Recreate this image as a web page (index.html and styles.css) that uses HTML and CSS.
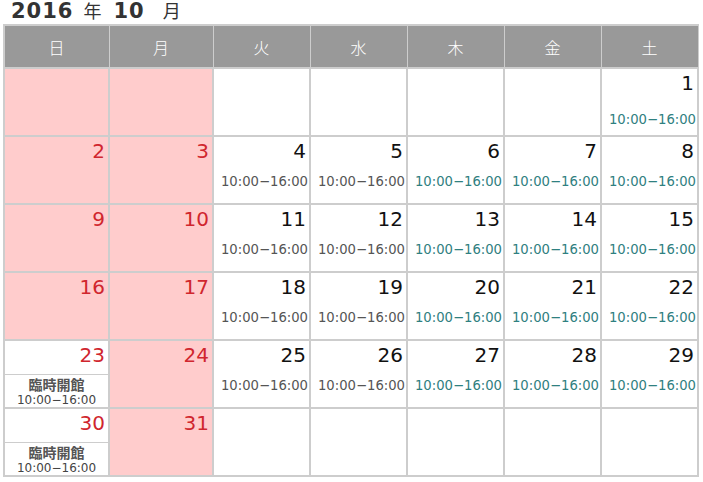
FILE: index.html
```html
<!DOCTYPE html>
<html lang="ja">
<head>
<meta charset="utf-8">
<link rel="stylesheet" href="styles.css">
</head>
<body>
<div class="title"><b class="num-b">2016</b><span class="jp y">年</span><b class="num-b n10">10</b><span class="jp m">月</span></div>
<div class="cal">
  <div class="hd">日</div><div class="hd">月</div><div class="hd">火</div><div class="hd">水</div><div class="hd">木</div><div class="hd">金</div><div class="hd">土</div>

  <div class="c closed"></div><div class="c closed"></div><div class="c"></div><div class="c"></div><div class="c"></div><div class="c"></div>
  <div class="c first"><div class="d">1</div><div class="t teal">10:00−16:00</div></div>

  <div class="c closed"><div class="d red">2</div></div>
  <div class="c closed"><div class="d red">3</div></div>
  <div class="c"><div class="d">4</div><div class="t">10:00−16:00</div></div>
  <div class="c"><div class="d">5</div><div class="t">10:00−16:00</div></div>
  <div class="c"><div class="d">6</div><div class="t teal">10:00−16:00</div></div>
  <div class="c"><div class="d">7</div><div class="t teal">10:00−16:00</div></div>
  <div class="c"><div class="d">8</div><div class="t teal">10:00−16:00</div></div>

  <div class="c closed"><div class="d red">9</div></div>
  <div class="c closed"><div class="d red">10</div></div>
  <div class="c"><div class="d">11</div><div class="t">10:00−16:00</div></div>
  <div class="c"><div class="d">12</div><div class="t">10:00−16:00</div></div>
  <div class="c"><div class="d">13</div><div class="t teal">10:00−16:00</div></div>
  <div class="c"><div class="d">14</div><div class="t teal">10:00−16:00</div></div>
  <div class="c"><div class="d">15</div><div class="t teal">10:00−16:00</div></div>

  <div class="c closed"><div class="d red">16</div></div>
  <div class="c closed"><div class="d red">17</div></div>
  <div class="c"><div class="d">18</div><div class="t">10:00−16:00</div></div>
  <div class="c"><div class="d">19</div><div class="t">10:00−16:00</div></div>
  <div class="c"><div class="d">20</div><div class="t teal">10:00−16:00</div></div>
  <div class="c"><div class="d">21</div><div class="t teal">10:00−16:00</div></div>
  <div class="c"><div class="d">22</div><div class="t teal">10:00−16:00</div></div>

  <div class="c special"><div class="d red sp">23</div><div class="note">臨時開館</div><div class="st">10:00−16:00</div></div>
  <div class="c closed"><div class="d red">24</div></div>
  <div class="c"><div class="d">25</div><div class="t">10:00−16:00</div></div>
  <div class="c"><div class="d">26</div><div class="t">10:00−16:00</div></div>
  <div class="c"><div class="d">27</div><div class="t teal">10:00−16:00</div></div>
  <div class="c"><div class="d">28</div><div class="t teal">10:00−16:00</div></div>
  <div class="c"><div class="d">29</div><div class="t teal">10:00−16:00</div></div>

  <div class="c special"><div class="d red sp">30</div><div class="note">臨時開館</div><div class="st">10:00−16:00</div></div>
  <div class="c closed"><div class="d red">31</div></div>
  <div class="c"></div><div class="c"></div><div class="c"></div><div class="c"></div><div class="c"></div>
</div>
</body>
</html>
```

FILE: styles.css
```css
html, body {
  margin: 0;
  padding: 0;
  background: #fff;
}
body {
  font-family: "DejaVu Sans", "Noto Sans CJK JP", sans-serif;
  color: #000;
}
.title {
  height: 24px;
  box-sizing: border-box;
  padding-left: 11px;
  display: flex;
  align-items: baseline;
  line-height: 22px;
  color: #333;
}
.num-b {
  font-family: "DejaVu Sans", sans-serif;
  font-weight: bold;
  font-size: 21px;
  letter-spacing: 1px;
}
.jp {
  font-family: "Noto Sans CJK JP", sans-serif;
  font-size: 18px;
  line-height: 18px;
  font-weight: normal;
}
.y { margin-left: 10px; }
.n10 { margin-left: 12px; }
.m { margin-left: 18px; }
.cal {
  margin-left: 3px;
  width: max-content;
  display: grid;
  grid-template-columns: 103px 102px repeat(5, 95px);
  grid-template-rows: 41px repeat(6, 66px);
  gap: 2px;
  padding: 2px;
  background: #cdcdcd;
}
.hd {
  background: #999;
  color: #fff;
  font-family: "Noto Sans CJK JP", sans-serif;
  font-weight: 300;
  font-size: 16px;
  display: flex;
  align-items: center;
  justify-content: center;
  box-shadow: 1px 0 0 #999;
}
.hd:last-child { box-shadow: none; }
.c {
  background: #fff;
  padding: 3px 3px 0;
  text-align: right;
  overflow: hidden;
}
.c.closed { background: #ffcccc; }
.d {
  font-size: 20px;
  line-height: 23px;
  color: #111;
}
.d.red { color: #d0262e; }
.t {
  font-size: 13.2px;
  line-height: 15px;
  margin-top: 11px;
  margin-right: -2px;
  color: #555;
  white-space: nowrap;
}
.t.teal { color: #2f8080; }
.first .t { margin-top: 17px; }
.c.special {
  padding: 0;
  text-align: center;
}
.d.sp {
  height: 34px;
  box-sizing: border-box;
  padding: 3px 3px 0;
  text-align: right;
  border-bottom: 1px solid #cdcdcd;
}
.note {
  font-family: "Noto Sans CJK JP", sans-serif;
  font-weight: bold;
  font-size: 14px;
  line-height: 17px;
  margin-top: 1px;
  color: #555;
}
.st {
  font-size: 12px;
  line-height: 14px;
  color: #444;
  white-space: nowrap;
}
```
